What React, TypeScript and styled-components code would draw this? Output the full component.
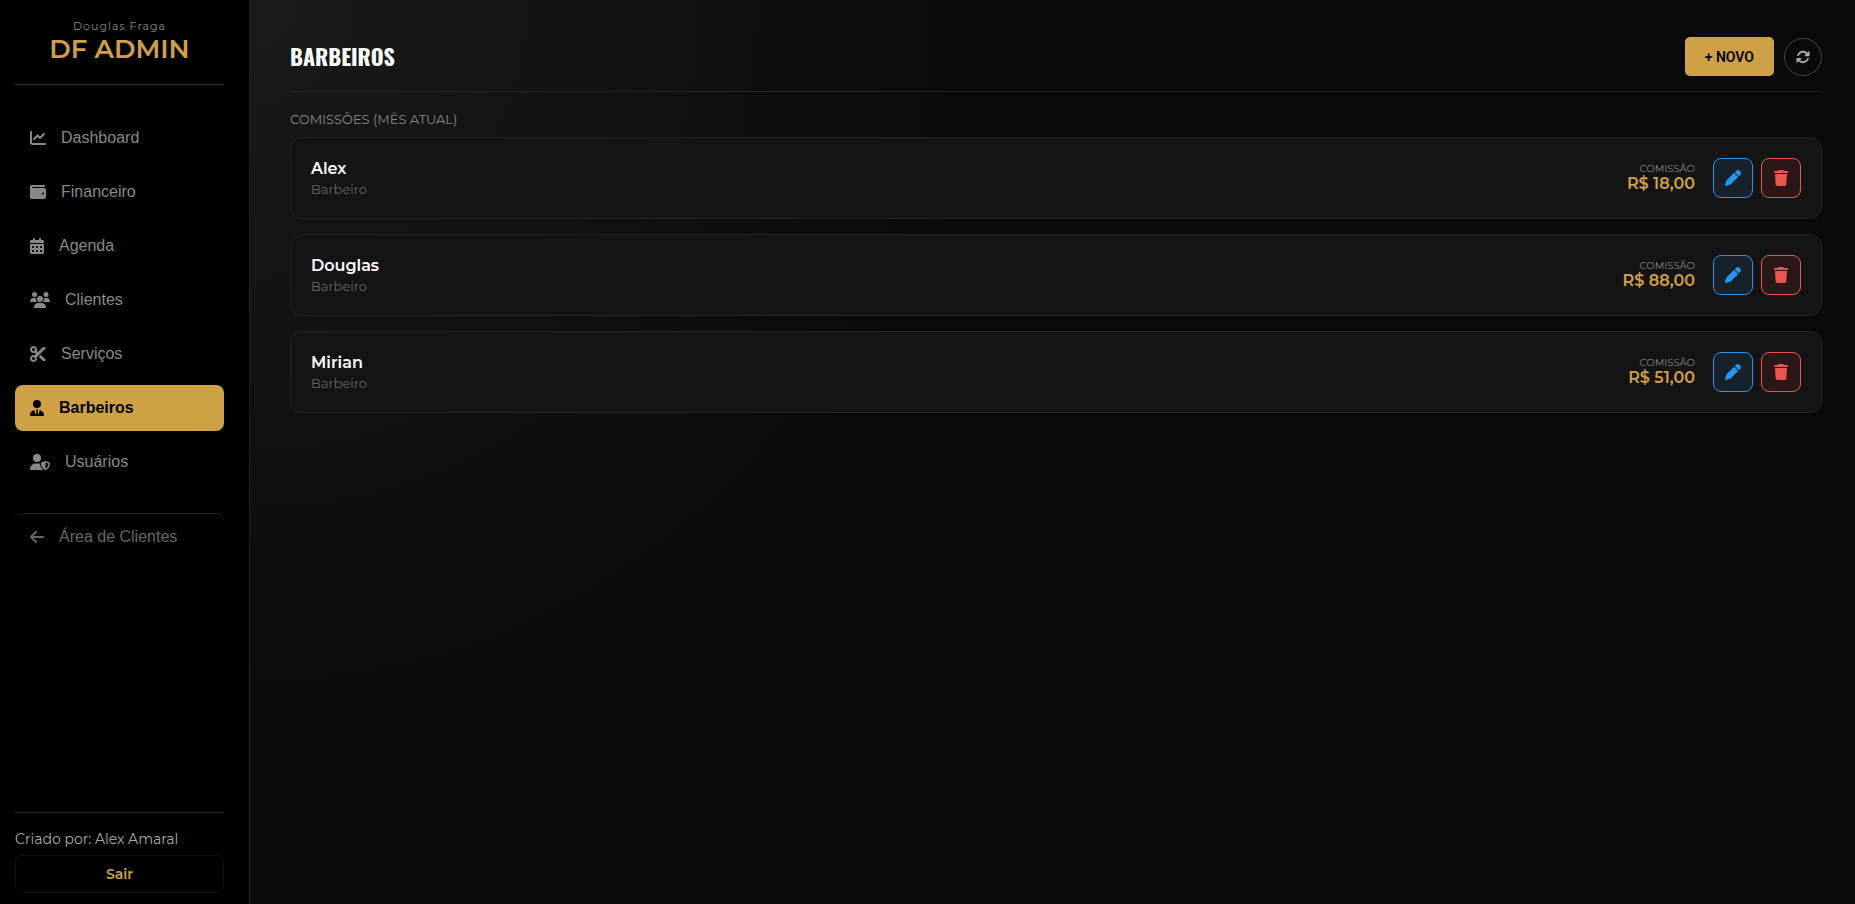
import React from "react";
import styled, { createGlobalStyle } from "styled-components";
import type { IconType } from "react-icons";
import {
  FaArrowLeft,
  FaCalendarDays,
  FaChartLine,
  FaPen,
  FaRotate,
  FaScissors,
  FaTrash,
  FaUsers,
  FaUserShield,
  FaUserTie,
  FaWallet,
} from "react-icons/fa6";

const brandFont = `Montserrat, Inter, sans-serif`;
const navFont = `"Liberation Sans", Arial, sans-serif`;
const titleFont = `Oswald, "Liberation Sans", sans-serif`;
const gold = "#cfa145";

const GlobalStyle = createGlobalStyle`
  *, *::before, *::after { box-sizing: border-box; }
  body {
    margin: 0;
    background: #0a0a0a;
    color: #fff;
    font-family: ${brandFont};
  }
  h1, h2, h3, p, ul { margin: 0; padding: 0; }
  ul { list-style: none; }
  button { font-family: inherit; cursor: pointer; }
`;

const Layout = styled.div`
  display: flex;
  min-height: 100vh;
`;

const Sidebar = styled.aside`
  display: flex;
  flex-direction: column;
  flex: 0 0 250px;
  padding: 20px 25px 11px 15px;
  background: #000;
  border-right: 1px solid #222;
`;

const Brand = styled.header`
  padding-bottom: 18px;
  border-bottom: 1px solid #333;
  text-align: center;
`;

const BrandOwner = styled.p`
  font-size: 11px;
  line-height: 13px;
  letter-spacing: 1px;
  color: #888;
`;

const BrandName = styled.h2`
  font-size: 26px;
  line-height: 33px;
  font-weight: 600;
  color: ${gold};
`;

const Menu = styled.nav`
  display: flex;
  flex-direction: column;
  gap: 8px;
  margin-top: 30px;
`;

const MenuLink = styled.a<{ $active?: boolean; $iconWidth: number }>`
  display: flex;
  align-items: center;
  gap: 15px;
  height: 46px;
  padding: 0 15px;
  border-radius: 8px;
  background: ${(p) => (p.$active ? gold : "transparent")};
  color: ${(p) => (p.$active ? "#000" : "#888")};
  font: ${(p) => (p.$active ? 700 : 400)} 16px/18px ${navFont};
  text-decoration: none;

  svg {
    flex: none;
    width: ${(p) => p.$iconWidth}px;
    height: 16px;
  }
`;

const ClientAreaLink = styled(MenuLink)`
  height: 47px;
  margin-top: 20px;
  border-top: 1px solid #222;
  color: #666;
`;

const SidebarFooter = styled.footer`
  margin-top: auto;
  padding-top: 17px;
  border-top: 1px solid #222;
`;

const Credit = styled.p`
  margin-bottom: 7px;
  font-size: 14px;
  line-height: 18px;
  color: #aaa;
`;

const LogoutButton = styled.button`
  width: 100%;
  height: 38px;
  border: 1px solid #111;
  border-radius: 8px;
  background: transparent;
  color: ${gold};
  font-size: 14px;
  font-weight: 600;
`;

const Main = styled.main`
  flex: 1;
  min-width: 0;
  padding: 37px 33px 40px 40px;
  background: radial-gradient(circle at top left, #1a1a1a, #0a0a0a 40%);
`;

const PageHeader = styled.header`
  display: flex;
  align-items: center;
  justify-content: space-between;
  padding-bottom: 15px;
  border-bottom: 1px solid #222;
`;

const PageTitle = styled.h1`
  font: 700 22px/39px ${titleFont};
  text-transform: uppercase;
`;

const HeaderActions = styled.div`
  display: flex;
  align-items: center;
  gap: 10px;
`;

const NewButton = styled.button`
  height: 39px;
  padding: 0 20px;
  border: 0;
  border-radius: 5px;
  background: ${gold};
  color: #000;
  font: 600 14px/16px Roboto, sans-serif;
`;

const RefreshButton = styled.button`
  display: grid;
  place-items: center;
  width: 38px;
  height: 38px;
  padding: 0;
  border: 1px solid #444;
  border-radius: 50%;
  background: transparent;
  color: #aaa;

  svg { width: 14px; height: 14px; }
`;

const SectionLabel = styled.h2`
  margin: 19px 0 9px;
  font-size: 13px;
  line-height: 17px;
  font-weight: 400;
  color: #888;
  text-transform: uppercase;
`;

const BarberList = styled.ul`
  display: flex;
  flex-direction: column;
  gap: 15px;
`;

const BarberCard = styled.li`
  display: flex;
  align-items: center;
  justify-content: space-between;
  padding: 20px;
  border: 1px solid #222;
  border-radius: 12px;
  background: #141414;
`;

const BarberName = styled.h3`
  font-size: 16px;
  line-height: 22px;
  font-weight: 600;
`;

const BarberRole = styled.p`
  font-size: 13px;
  line-height: 18px;
  color: #666;
`;

const CardSide = styled.div`
  display: flex;
  align-items: center;
  gap: 8px;
`;

const Commission = styled.div`
  margin-right: 10px;
  text-align: right;
`;

const CommissionLabel = styled.p`
  font-size: 10px;
  line-height: 12px;
  color: #888;
`;

const CommissionValue = styled.p`
  font-size: 16px;
  line-height: 18px;
  font-weight: 600;
  color: ${gold};
`;

const ActionButton = styled.button<{ $tone: "edit" | "remove" }>`
  display: grid;
  place-items: center;
  width: 40px;
  height: 40px;
  padding: 0;
  border: 1px solid currentColor;
  border-radius: 8px;
  color: ${(p) => (p.$tone === "edit" ? "#2196f3" : "#ef5350")};
  background: ${(p) => (p.$tone === "edit" ? "#16212a" : "#2a1717")};

  svg { width: 16px; height: 16px; }
`;

const menu: { label: string; icon: IconType; iconWidth: number; active?: boolean }[] = [
  { label: "Dashboard", icon: FaChartLine, iconWidth: 16 },
  { label: "Financeiro", icon: FaWallet, iconWidth: 16 },
  { label: "Agenda", icon: FaCalendarDays, iconWidth: 14 },
  { label: "Clientes", icon: FaUsers, iconWidth: 20 },
  { label: "Serviços", icon: FaScissors, iconWidth: 16 },
  { label: "Barbeiros", icon: FaUserTie, iconWidth: 14, active: true },
  { label: "Usuários", icon: FaUserShield, iconWidth: 20 },
];

const barbers = [
  { name: "Alex", commission: "R$ 18,00" },
  { name: "Douglas", commission: "R$ 88,00" },
  { name: "Mirian", commission: "R$ 51,00" },
];

export default function App() {
  return (
    <>
      <GlobalStyle />
      <Layout>
        <Sidebar>
          <Brand>
            <BrandOwner>Douglas Fraga</BrandOwner>
            <BrandName>DF ADMIN</BrandName>
          </Brand>
          <Menu>
            {menu.map(({ label, icon: Icon, iconWidth, active }) => (
              <MenuLink
                key={label}
                href="#"
                $active={active}
                $iconWidth={iconWidth}
                aria-current={active ? "page" : undefined}
              >
                <Icon />
                {label}
              </MenuLink>
            ))}
            <ClientAreaLink href="#" $iconWidth={14}>
              <FaArrowLeft />
              Área de Clientes
            </ClientAreaLink>
          </Menu>
          <SidebarFooter>
            <Credit>Criado por: Alex Amaral</Credit>
            <LogoutButton type="button">Sair</LogoutButton>
          </SidebarFooter>
        </Sidebar>
        <Main>
          <PageHeader>
            <PageTitle>Barbeiros</PageTitle>
            <HeaderActions>
              <NewButton type="button">+ NOVO</NewButton>
              <RefreshButton type="button" aria-label="Atualizar">
                <FaRotate />
              </RefreshButton>
            </HeaderActions>
          </PageHeader>
          <SectionLabel>Comissões (mês atual)</SectionLabel>
          <BarberList>
            {barbers.map((barber) => (
              <BarberCard key={barber.name}>
                <div>
                  <BarberName>{barber.name}</BarberName>
                  <BarberRole>Barbeiro</BarberRole>
                </div>
                <CardSide>
                  <Commission>
                    <CommissionLabel>COMISSÃO</CommissionLabel>
                    <CommissionValue>{barber.commission}</CommissionValue>
                  </Commission>
                  <ActionButton type="button" $tone="edit" aria-label={`Editar ${barber.name}`}>
                    <FaPen />
                  </ActionButton>
                  <ActionButton type="button" $tone="remove" aria-label={`Excluir ${barber.name}`}>
                    <FaTrash />
                  </ActionButton>
                </CardSide>
              </BarberCard>
            ))}
          </BarberList>
        </Main>
      </Layout>
    </>
  );
}
